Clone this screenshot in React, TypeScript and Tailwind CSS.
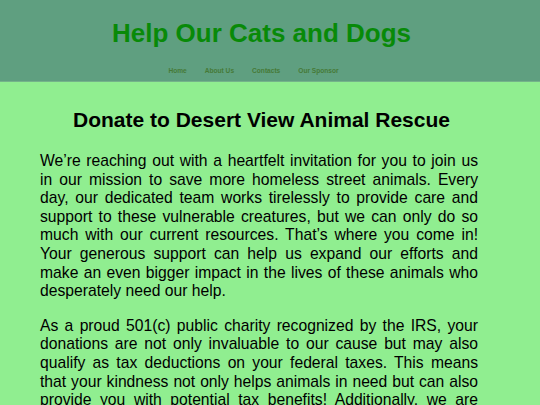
const navItems = ['Home', 'About Us', 'Contacts', 'Our Sponsor'];

export default function App() {
  return (
    <div className="min-h-[405px] bg-[#90ee90] font-['Liberation_Sans',Arial,sans-serif]">
      <header className="bg-[#5f9f80] border-b border-[#74b38a]">
        <div className="w-[523px] pt-[18px] pb-[6px] text-center">
          <h1 className="text-[26px] leading-[30px] font-bold text-[#088a08]">Help Our Cats and Dogs</h1>
          <nav className="mt-[19px] pr-[16px] flex justify-center gap-[18px] text-[6.6px] leading-[8px] font-bold text-[#467a37]">
            {navItems.map(item => (
              <a key={item} href="#" className="">
                {item}
              </a>
            ))}
          </nav>
        </div>
      </header>

      <main className="w-[523px] pt-[26px] px-[40px] text-black">
        <h2 className="text-center text-[21px] leading-[24px] font-bold">Donate to Desert View Animal Rescue</h2>
        <p className="mt-[20px] w-[438px] text-justify text-[15.7px] leading-[18.6px]">
          We’re reaching out with a heartfelt invitation for you to join us in our mission to save more homeless street animals. Every day, our dedicated team works tirelessly to provide care and support to these vulnerable creatures, but we can only do so much with our current resources. That’s where you come in! Your generous support can help us expand our efforts and make an even bigger impact in the lives of these animals who desperately need our help.
        </p>
        <p className="mt-[16px] w-[438px] text-justify [text-align-last:justify] text-[15.7px] leading-[18.6px]">
          As a proud 501(c) public charity recognized by the IRS, your donations are not only invaluable to our cause but may also qualify as tax deductions on your federal taxes. This means that your kindness not only helps animals in need but can also provide you with potential tax benefits! Additionally, we are
        </p>
      </main>
    </div>
  );
}
